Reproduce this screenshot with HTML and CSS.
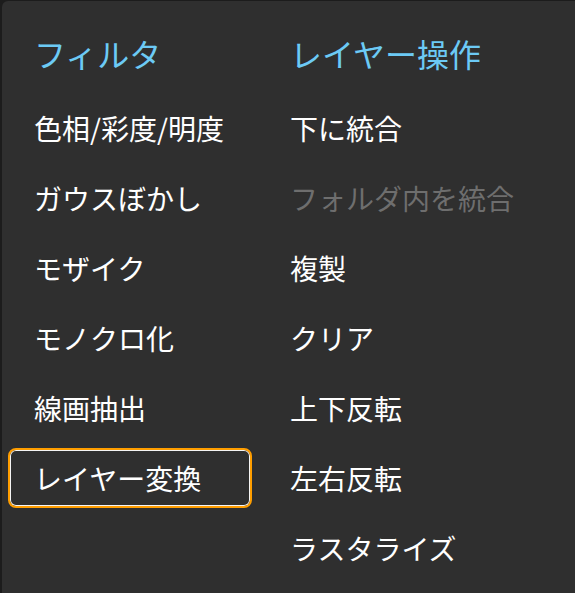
FILE: index.html
```html
<!DOCTYPE html>
<html lang="ja">
<head>
  <meta charset="UTF-8">
  <meta name="viewport" content="width=device-width, initial-scale=1" />
  <title>フィルタ / レイヤー操作</title>
  <link rel="stylesheet" href="styles.css">
</head>
<body>
  <div class="menu">
    <div class="menu-column">
      <h2>フィルタ</h2>
      <ul>
        <li>色相/彩度/明度</li>
        <li>ガウスぼかし</li>
        <li>モザイク</li>
        <li>モノクロ化</li>
        <li>線画抽出</li>
        <li class="focused">レイヤー変換</li>
      </ul>
    </div>
    <div class="menu-column">
      <h2>レイヤー操作</h2>
      <ul>
        <li>下に統合</li>
        <li class="disabled">フォルダ内を統合</li>
        <li>複製</li>
        <li>クリア</li>
        <li>上下反転</li>
        <li>左右反転</li>
        <li>ラスタライズ</li>
      </ul>
    </div>
  </div>
</body>
</html>
```

FILE: styles.css
```css
html,
body {
  margin: 0;
  height: 100%;
}

body {
  font-family: "Noto Sans CJK JP", "Noto Sans", sans-serif;
  background-color: #1c1c1c;
  padding: 1px 0 0 2px;
  box-sizing: border-box;
}

.menu {
  display: grid;
  grid-template-columns: 244px 1fr;
  column-gap: 12px;
  height: 100%;
  padding: 22px 0 0 6px;
  box-sizing: border-box;
  background: #2f2f2f;
  border-radius: 6px 0 0 0;
}

.menu-column h2 {
  margin: 0 0 15px;
  padding-left: 26px;
  height: 60px;
  line-height: 60px;
  font-size: 32px;
  font-weight: 400;
  color: #6ccaf5;
}

.menu-column ul {
  list-style: none;
  margin: 0;
  padding: 0;
  display: flex;
  flex-direction: column;
  gap: 10px;
}

.menu-column li {
  display: flex;
  align-items: center;
  height: 60px;
  padding: 0 26px;
  box-sizing: border-box;
  font-size: 28px;
  color: #fff;
  white-space: nowrap;
  border-radius: 8px;
}

.menu-column li.disabled {
  color: #6e6e6e;
}

.menu-column li.focused {
  border: 2px solid #ff9e00;
  box-shadow: inset 0 0 0 1px #f4f4f4;
  padding-left: 24px;
}
```
